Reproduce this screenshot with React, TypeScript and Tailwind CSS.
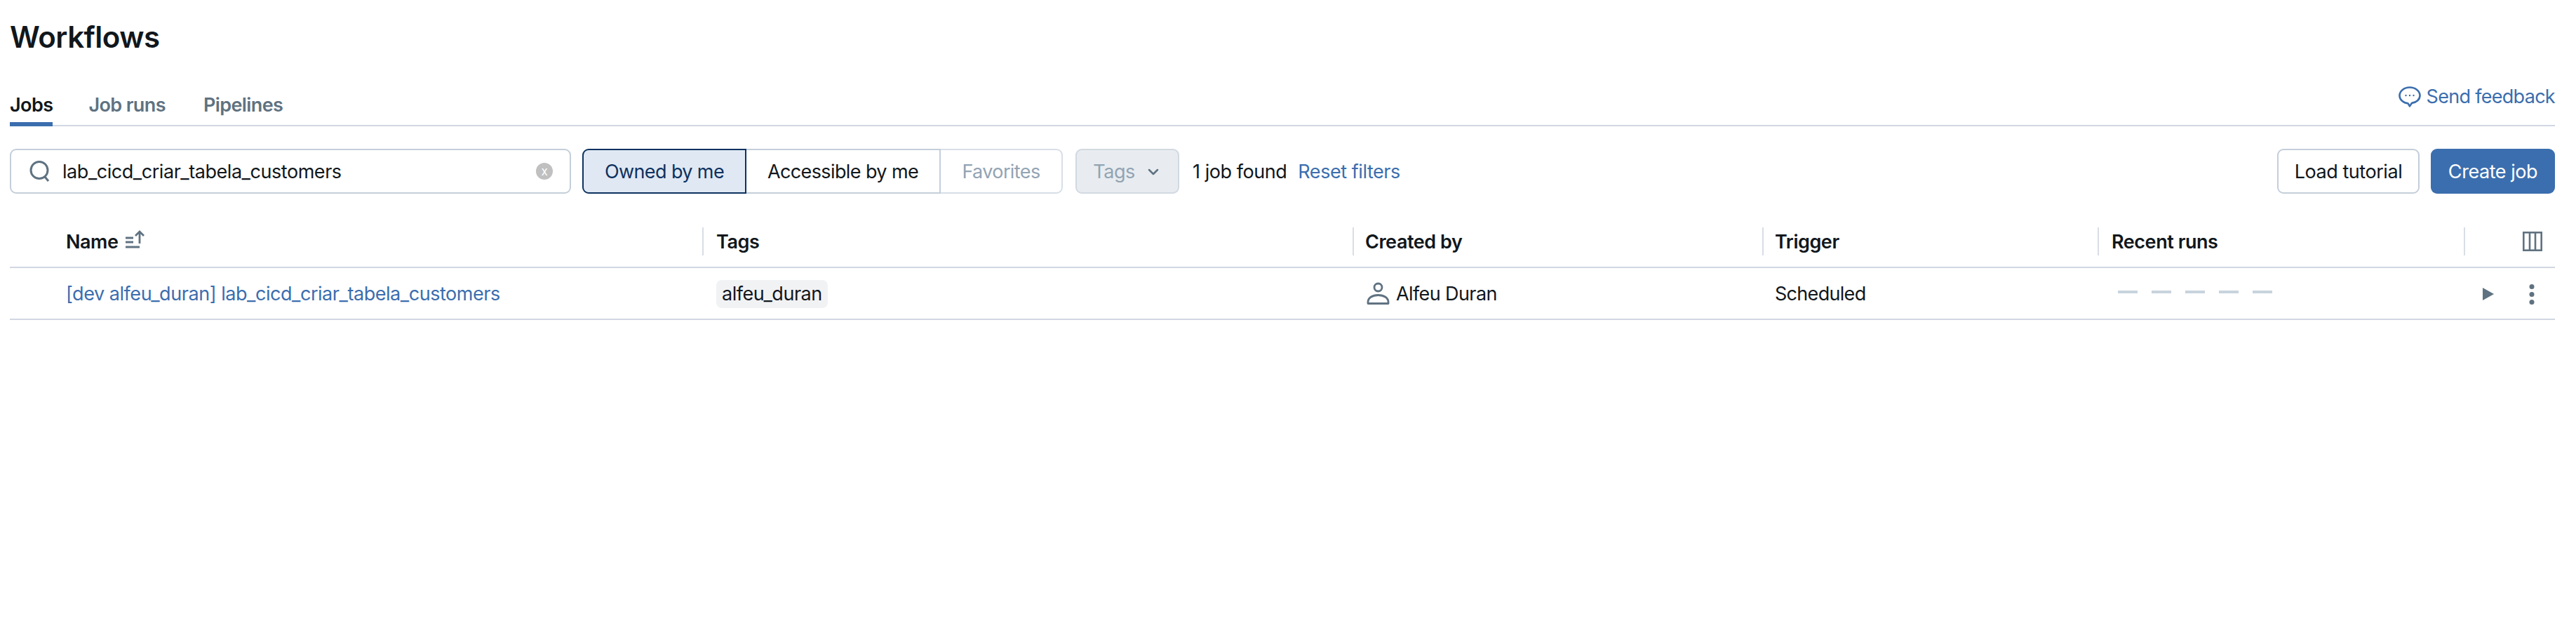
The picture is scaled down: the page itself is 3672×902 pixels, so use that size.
import React from 'react';
import { ChevronDown } from 'lucide-react';

const columns = 'grid grid-cols-[987px_927px_584px_478px_522px_130px]';

const HeaderCell = ({ children, inset = 'pl-[18px]' }: { children?: React.ReactNode; inset?: string }) => (
    <div className={`flex h-10 items-center border-l-2 border-[#d8dee6] pt-[2px] text-[27px] font-semibold ${inset}`}>
        {children}
    </div>
);

const App: React.FC = () => {
    return (
        <div className="min-h-[902px] bg-white pl-[14px] pr-[30px] font-['Inter',sans-serif] text-[27px] tracking-[-0.45px] text-[#11171c]">
            {/* Title */}
            <div className="h-[100px] pt-[27px]">
                <h1 className="text-[42px] leading-[52px] font-semibold tracking-[-0.5px]">Workflows</h1>
            </div>

            {/* Tabs */}
            <div className="flex h-[80px] items-end justify-between border-b-2 border-[#d1d7e2]">
                <div className="flex tracking-[-0.6px]">
                    <div className="-mb-[2px] h-[47px] border-b-[6px] border-[#3b6eae] leading-[34px] font-semibold">Jobs</div>
                    <div className="ml-[51px] h-[45px] leading-[34px] font-semibold text-[#5f7281]">Job runs</div>
                    <div className="ml-[54px] h-[45px] leading-[34px] font-semibold text-[#5f7281]">Pipelines</div>
                </div>
                <div className="mb-[20px] flex items-center gap-2 tracking-[-0.7px] text-[#3b6eae]">
                    <svg width="32" height="30" viewBox="0 0 32 30" fill="none" stroke="#3b6eae" strokeWidth="2.600">
                        <path d="M16 1.500C8 1.500 1.500 6.800 1.500 13.200c0 6 5.600 10.600 12 11.100l2.400 4 3-4.400c6.800-.9 11.600-5.400 11.600-10.700C30.500 6.800 24 1.500 16 1.500Z" strokeLinejoin="round" />
                        <circle cx="10.500" cy="13" r="1.200" fill="#3b6eae" stroke="none" />
                        <circle cx="16" cy="13" r="1.200" fill="#3b6eae" stroke="none" />
                        <circle cx="21.500" cy="13" r="1.200" fill="#3b6eae" stroke="none" />
                    </svg>
                    <span>Send feedback</span>
                </div>
            </div>

            {/* Toolbar */}
            <div className="mt-[32px] flex h-16 items-center">
                <div className="flex h-16 w-[800px] items-center rounded-[9px] border-2 border-[#c4ced9] pl-[25px] pr-[24px]">
                    <svg width="32" height="30" viewBox="0 0 32 30" fill="none" stroke="#5f7281" strokeWidth="3">
                        <circle cx="15" cy="13.500" r="12" />
                        <path d="M23 23l5 6" />
                    </svg>
                    <span className="ml-[16px] flex-1 pt-[3px]">lab_cicd_criar_tabela_customers</span>
                    <span className="flex h-6 w-6 items-center justify-center rounded-full bg-[#c0c0c0] text-[17px] leading-none text-white">x</span>
                </div>
                <div className="ml-4 flex h-16 tracking-[-0.6px]">
                    <div className="flex w-[234px] items-center justify-center rounded-l-[9px] border-2 border-[#0e3260] bg-[#e0e8f3] pt-[2px] text-[#0e3260]">Owned by me</div>
                    <div className="flex w-[277px] items-center justify-center border-y-2 border-r-2 border-[#c4ced9] pt-[2px]">Accessible by me</div>
                    <div className="flex w-[174px] items-center justify-center rounded-r-[9px] border-y-2 border-r-2 border-[#d8dee6] pt-[2px] text-[#92a4b3]">Favorites</div>
                </div>
                <div className="ml-[18px] flex h-16 w-[148px] items-center justify-center gap-[14px] rounded-[9px] border-2 border-[#d1d9e1] bg-[#e8ecf0] pt-[2px] text-[#92a4b3]">
                    <span>Tags</span>
                    <ChevronDown className="h-6 w-6 text-[#5f7281]" strokeWidth={2.500} />
                </div>
                <span className="ml-[19px] pt-[2px]">1 job found</span>
                <span className="ml-4 pt-[2px] text-[#3b6eae]">Reset filters</span>
                <div className="ml-auto flex gap-4">
                    <button className="h-16 w-[203px] rounded-[9px] border-2 border-[#c4ced9] bg-white pt-[2px]">Load tutorial</button>
                    <button className="h-16 w-[177px] rounded-[9px] bg-[#3b6eae] pt-[2px] text-white">Create job</button>
                </div>
            </div>

            {/* Table header */}
            <div className={`${columns} mt-12 h-[58px] border-b-2 border-[#d1d7e2] pb-[16px]`}>
                <div className="flex h-10 items-center pl-[80px] pt-[2px] text-[27px] font-semibold">
                    <span>Name</span>
                    <svg className="mb-[8px] ml-[10px]" width="30" height="26" viewBox="0 0 30 26" fill="none" stroke="#5f7281" strokeWidth="2.800">
                        <path d="M1 11h11M1 17h11M1 24h20" />
                        <path d="M21 19V2M15 8l6-6 6 6" />
                    </svg>
                </div>
                <HeaderCell>Tags</HeaderCell>
                <HeaderCell inset="pl-[16px]">Created by</HeaderCell>
                <HeaderCell inset="pl-[16px]">Trigger</HeaderCell>
                <HeaderCell>Recent runs</HeaderCell>
                <div className="flex h-10 items-center justify-end border-l-2 border-[#d8dee6] pr-[18px]">
                    <svg width="28" height="28" viewBox="0 0 28 28" fill="none" stroke="#5f7281" strokeWidth="2.600">
                        <rect x="1.300" y="1.300" width="25.400" height="25.400" />
                        <path d="M10 1v26M18 1v26" />
                    </svg>
                </div>
            </div>

            {/* Row */}
            <div className={`${columns} h-[74px] items-center border-b-2 border-[#d1d7e2] pt-[2px]`}>
                <a className="pl-[80px] text-[#3b6eae]">[dev alfeu_duran] lab_cicd_criar_tabela_customers</a>
                <div className="pl-[20px]">
                    <span className="inline-flex h-10 items-center rounded-[8px] bg-[#f1f2f4] px-2">alfeu_duran</span>
                </div>
                <div className="flex items-center gap-[9px] pl-[20px] tracking-[-0.6px]">
                    <svg className="-mt-[2px]" width="33" height="32" viewBox="0 0 33 32" fill="none" stroke="#5f7281" strokeWidth="2.800">
                        <circle cx="16.500" cy="7.500" r="5.500" />
                        <path d="M2 30.500v-2c0-6 6-10 14.500-10S31 22.500 31 28.500v2Z" strokeLinejoin="round" />
                    </svg>
                    <span>Alfeu Duran</span>
                </div>
                <div className="pl-[18px] tracking-[-0.7px]">Scheduled</div>
                <div className="-mt-[6px] flex gap-5 pl-[29px]">
                    {[0, 1, 2, 3, 4].map(i => (
                        <div key={i} className="h-1 w-7 bg-[#c8d3dd]" />
                    ))}
                </div>
                <div className="flex items-center justify-end gap-[50px] pr-[29px]">
                    <svg width="16" height="18" viewBox="0 0 16 18" fill="#5f7281">
                        <path d="M0 0l16 9-16 9Z" />
                    </svg>
                    <svg width="8" height="29" viewBox="0 0 8 29" fill="#5f7281">
                        <circle cx="4" cy="3.500" r="3.500" />
                        <circle cx="4" cy="14.500" r="3.500" />
                        <circle cx="4" cy="25.500" r="3.500" />
                    </svg>
                </div>
            </div>
        </div>
    );
};

export default App;
